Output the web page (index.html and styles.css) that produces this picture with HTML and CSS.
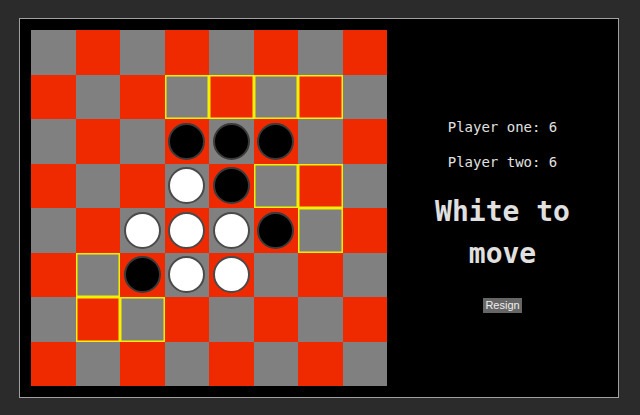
FILE: index.html
```html
<!DOCTYPE html>
<html>
<head>
<meta charset="utf-8">
<link rel="stylesheet" href="styles.css">
</head>
<body>
<div class="frame">
  <div class="board">
    <div class="cell g"></div><div class="cell r"></div><div class="cell g"></div><div class="cell r"></div><div class="cell g"></div><div class="cell r"></div><div class="cell g"></div><div class="cell r"></div>
    <div class="cell r"></div><div class="cell g"></div><div class="cell r"></div><div class="cell g hl"></div><div class="cell r hl"></div><div class="cell g hl"></div><div class="cell r hl"></div><div class="cell g"></div>
    <div class="cell g"></div><div class="cell r"></div><div class="cell g"></div><div class="cell r"><span class="piece black"></span></div><div class="cell g"><span class="piece black"></span></div><div class="cell r"><span class="piece black"></span></div><div class="cell g"></div><div class="cell r"></div>
    <div class="cell r"></div><div class="cell g"></div><div class="cell r"></div><div class="cell g"><span class="piece white"></span></div><div class="cell r"><span class="piece black"></span></div><div class="cell g hl"></div><div class="cell r hl"></div><div class="cell g"></div>
    <div class="cell g"></div><div class="cell r"></div><div class="cell g"><span class="piece white"></span></div><div class="cell r"><span class="piece white"></span></div><div class="cell g"><span class="piece white"></span></div><div class="cell r"><span class="piece black"></span></div><div class="cell g hl"></div><div class="cell r"></div>
    <div class="cell r"></div><div class="cell g hl"></div><div class="cell r"><span class="piece black"></span></div><div class="cell g"><span class="piece white"></span></div><div class="cell r"><span class="piece white"></span></div><div class="cell g"></div><div class="cell r"></div><div class="cell g"></div>
    <div class="cell g"></div><div class="cell r hl"></div><div class="cell g hl"></div><div class="cell r"></div><div class="cell g"></div><div class="cell r"></div><div class="cell g"></div><div class="cell r"></div>
    <div class="cell r"></div><div class="cell g"></div><div class="cell r"></div><div class="cell g"></div><div class="cell r"></div><div class="cell g"></div><div class="cell r"></div><div class="cell g"></div>
  </div>
  <div class="panel">
    <p class="score first">Player one: 6</p>
    <p class="score">Player two: 6</p>
    <h1 class="turn">White to move</h1>
    <div class="actions"><button class="resign">Resign</button></div>
  </div>
</div>
</body>
</html>
```
FILE: styles.css
```css
html, body {
  margin: 0;
  padding: 0;
  background: #2b2b2b;
}
body {
  padding: 18px 0 0 19px;
  font-family: "DejaVu Sans Mono", monospace;
}
.frame {
  box-sizing: border-box;
  width: 600px;
  display: flex;
  background: #000;
  border: 1px solid #a0a0a0;
  padding: 11px 0 11px 11px;
}
.board {
  width: 356px;
  height: 356px;
  display: grid;
  grid-template-columns: repeat(8, 1fr);
  grid-template-rows: repeat(8, 1fr);
  flex: none;
}
.cell {
  display: flex;
  align-items: center;
  justify-content: center;
}
.g { background: #808080; }
.r { background: #f02a00; }
.hl { box-shadow: inset 0 0 0 1.5px #f2f200; }
.piece {
  box-sizing: border-box;
  width: 37px;
  height: 37px;
  border-radius: 50%;
  border: 2px solid #474747;
}
.black { background: #000; border-color: #3a3a3a; }
.white { background: #fff; border-color: #4a4a4a; }
.panel {
  flex: 1;
  display: flex;
  flex-direction: column;
  align-items: center;
  text-align: center;
  color: #e0e0e0;
  line-height: 1.5;
  padding-top: 86.5px;
}
.score {
  font-size: 14px;
  margin: 0;
}
.score + .score {
  margin-top: 14px;
}
.turn {
  font-size: 28px;
  font-weight: bold;
  margin: 18.5px 0 0;
  width: 160px;
}
.actions {
  margin-top: 23px;
  display: flex;
}
.resign {
  font-family: "Liberation Sans", Arial, sans-serif;
  font-size: 11px;
  line-height: 13px;
  padding: 1px 2px;
  border: none;
  background: #666;
  color: #eee;
}
```
